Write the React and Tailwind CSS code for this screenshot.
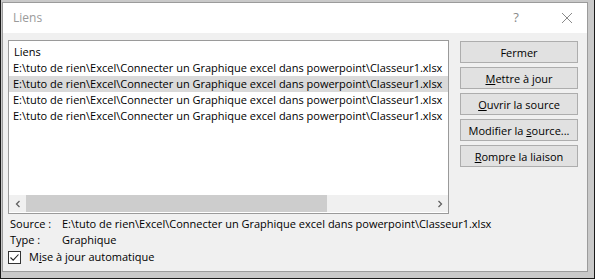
import React from "react";

const PATH = "E:\\tuto de rien\\Excel\\Connecter un Graphique excel dans powerpoint\\Classeur1.xlsx";
const font = { fontFamily: '"Open Sans", "Noto Sans", sans-serif' };

function Btn({ children }) {
  return (
    <div className="h-[22px] w-[118px] flex items-center justify-center bg-[#e1e1e1] border border-[#adadad] text-[11px] text-black leading-none">
      {children}
    </div>
  );
}

export default function App() {
  return (
    <div
      className="w-[595px] h-[279px] bg-[#c9c9c9] border-l border-r border-b border-[#1a1a1a] pl-[1px] pt-[2px] overflow-hidden"
      style={font}
    >
      <div className="w-[586px] h-[270px] border border-[#9b9b9b] bg-[#f0f0f0] flex flex-col">
        {/* title bar */}
        <div className="h-[30px] bg-white flex items-center text-[12px] text-[#9a9a9a]">
          <span className="pl-[10px] flex-1">Liens</span>
          <span className="w-[14px] text-center text-[13px] text-[#8a8a8a] mr-[38px]">?</span>
          <svg width="12" height="12" viewBox="0 0 12 12" className="mr-[14px]">
            <path d="M1 1 L11 11 M11 1 L1 11" stroke="#8a8a8a" strokeWidth="1" fill="none" />
          </svg>
        </div>
        {/* body */}
        <div className="flex pl-[5px] pt-[7px]">
          <div className="w-[441px] h-[174px] border border-[#9a9a9a] bg-white flex flex-col">
            <div className="flex-1 pt-[3px] text-[11px] leading-[16px] text-black whitespace-nowrap overflow-hidden">
              <div className="pl-[5px]">Liens</div>
              <div className="pl-[4px]">{PATH}</div>
              <div className="pl-[4px] bg-[#dadada]">{PATH}</div>
              <div className="pl-[4px]">{PATH}</div>
              <div className="pl-[4px]">{PATH}</div>
            </div>
            <div className="h-[17px] flex items-center bg-[#f0f0f0] mb-[1px]">
              <div className="w-[17px] flex items-center justify-center">
                <svg width="6" height="8" viewBox="0 0 6 8">
                  <path d="M4.5 1 L1.5 4 L4.5 7" stroke="#606060" strokeWidth="1.3" fill="none" />
                </svg>
              </div>
              <div className="w-[301px] h-[17px] bg-[#cdcdcd]" />
              <div className="flex-1" />
              <div className="w-[17px] flex items-center justify-center">
                <svg width="6" height="8" viewBox="0 0 6 8">
                  <path d="M1.5 1 L4.5 4 L1.5 7" stroke="#606060" strokeWidth="1.3" fill="none" />
                </svg>
              </div>
            </div>
          </div>
          <div className="ml-[11px] flex flex-col gap-[4px] pt-[1px]">
            <Btn>Fermer</Btn>
            <Btn><span><u>M</u>ettre à jour</span></Btn>
            <Btn><span><u>O</u>uvrir la source</span></Btn>
            <Btn><span>Modifier la <u>s</u>ource...</span></Btn>
            <Btn><span><u>R</u>ompre la liaison</span></Btn>
          </div>
        </div>
        <div className="pl-[7px] pt-[2px] text-[11px] leading-[16px] text-black whitespace-nowrap">
          <div className="flex">
            <span className="w-[52px]">Source :</span>
            <span>{PATH}</span>
          </div>
          <div className="flex">
            <span className="w-[52px]">Type :</span>
            <span>Graphique</span>
          </div>
          <div className="flex items-center mt-[1px]">
            <div className="w-[13px] h-[13px] border border-[#333] bg-white flex items-center justify-center -ml-[2px]">
              <svg width="11" height="11" viewBox="0 0 11 11">
                <path d="M1.5 5.5 L4.2 8.2 L9.5 2.5" stroke="#222" strokeWidth="1.1" fill="none" />
              </svg>
            </div>
            <span className="ml-[8px]">M<u>i</u>se à jour automatique</span>
          </div>
        </div>
      </div>
    </div>
  );
}
